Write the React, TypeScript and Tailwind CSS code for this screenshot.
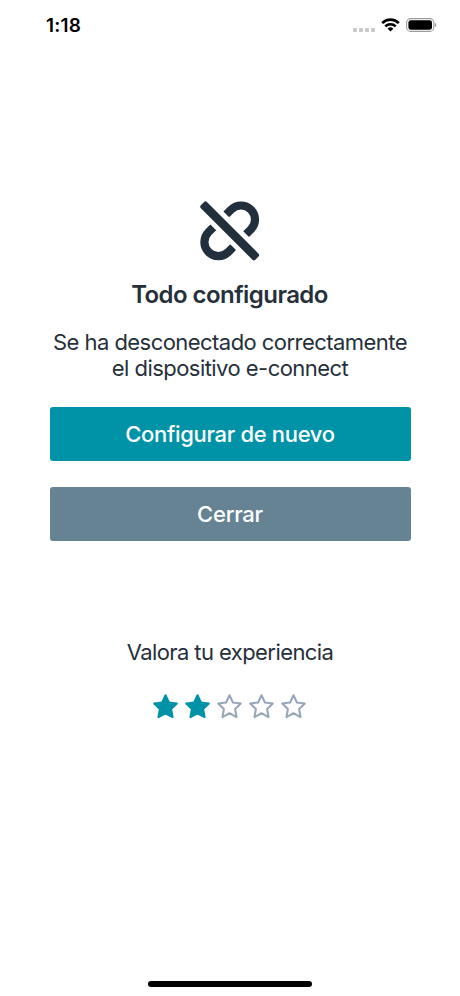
import { useState } from "react";

const STAR_PATH =
  "M13 2.2 L16.3 9.1 L23.9 10.1 L18.4 15.4 L19.8 23.2 L13 19.5 L6.2 23.2 L7.6 15.4 L2.1 10.1 L9.7 9.1 Z";

const StatusBar = () => {
  return (
    <header className="flex h-[50px] items-center justify-between pl-[46px] pr-[23px]">
      <span className="pt-px text-[19px] leading-[22px] font-semibold tracking-[0.2px] text-black">1:18</span>
      <div className="flex items-center">
        <div className="mt-[9px] flex gap-[2px]">
          <i className="size-[4px] rounded-[1px] bg-[#c9c9c9]" />
          <i className="size-[4px] rounded-[1px] bg-[#c9c9c9]" />
          <i className="size-[4px] rounded-[1px] bg-[#c9c9c9]" />
          <i className="size-[4px] rounded-[1px] bg-[#c9c9c9]" />
        </div>
        <svg className="ml-[6px] h-[14px] w-[19px]" viewBox="0 0 19 14" fill="none" stroke="#000">
          <path d="M1.2 5.1 A11.8 11.8 0 0 1 17.8 5.1" strokeWidth="2.7" />
          <path d="M4.3 8.3 A7.4 7.4 0 0 1 14.7 8.3" strokeWidth="2.5" />
          <path d="M9.5 13.5 L6.6 10.7 A4.1 4.1 0 0 1 12.4 10.7 Z" fill="#000" stroke="none" />
        </svg>
        <svg className="ml-[6px] h-[14px] w-[31px]" viewBox="0 0 31 14">
          <rect x="0.6" y="0.6" width="27.2" height="12.8" rx="4" fill="none" stroke="#9b9b9b" strokeWidth="1.1" />
          <rect x="2.4" y="2.2" width="23.6" height="9.6" rx="2.4" fill="#000" />
          <path d="M28.8 4.8 Q30.4 5.4 30.4 7 Q30.4 8.6 28.8 9.2 Z" fill="#9b9b9b" />
        </svg>
      </div>
    </header>
  );
};

const UnlinkIcon = () => {
  return (
    <svg className="h-[60px] w-[60px]" viewBox="200 201 60 60" fill="none" stroke="#22303e" strokeWidth="8.2">
      <path d="M226.3 214.4 L231.1 209.6 A14 14 0 0 1 250.9 229.4 L246.1 234.2" />
      <path d="M233.1 247.2 L228.3 252 A14 14 0 0 1 208.5 232.2 L213.3 227.4" />
      <rect x="191.2" y="226.6" width="77" height="8.6" rx="2" transform="rotate(45 229.7 230.9)" fill="#22303e" stroke="none" />
    </svg>
  );
};

const Rating = () => {
  const [rating, setRating] = useState(2);

  return (
    <div className="mt-[28px] mr-[2px] flex gap-[5px]">
      {[1, 2, 3, 4, 5].map((value) => (
        <button key={value} type="button" aria-label={`${value}`} onClick={() => setRating(value)}>
          <svg className="size-[27px]" viewBox="0 0 26 26" strokeWidth="2" strokeLinejoin="round">
            <path
              d={STAR_PATH}
              className={value <= rating ? "fill-[#0093a7] stroke-[#0093a7]" : "fill-white stroke-[#98a6b9]"}
            />
          </svg>
        </button>
      ))}
    </div>
  );
};

const App = () => {
  return (
    <div className="flex h-[996px] w-[460px] flex-col bg-white font-['Inter',sans-serif] text-[#26303b]">
      <StatusBar />
      <main className="flex flex-1 flex-col items-center px-[49.5px] pt-[151px]">
        <UnlinkIcon />
        <h1 className="mt-[18px] mr-px text-[24px] leading-[32px] font-semibold tracking-[-0.56px] whitespace-nowrap">Todo configurado</h1>
        <p className="mt-[18px] text-center text-[22px] leading-[26px] tracking-[-0.55px] whitespace-nowrap">
          Se ha desconectado correctamente
          <br />
          el dispositivo e-connect
        </p>
        <button type="button" className="mt-[26px] h-[54px] w-full rounded-[3px] bg-[#0093a7] text-[22px] font-medium tracking-[-0.33px] text-white">
          Configurar de nuevo
        </button>
        <button type="button" className="mt-[26px] h-[54px] w-full rounded-[3px] bg-[#668394] text-[22px] font-medium tracking-[-0.25px] text-white">
          Cerrar
        </button>
        <p className="mt-[98px] text-[22px] leading-[26px] tracking-[-0.58px]">Valora tu experiencia</p>
        <Rating />
      </main>
      <footer className="flex justify-center pb-[9px]">
        <div className="h-[6px] w-[164px] rounded-full bg-black" />
      </footer>
    </div>
  );
};

export default App;
